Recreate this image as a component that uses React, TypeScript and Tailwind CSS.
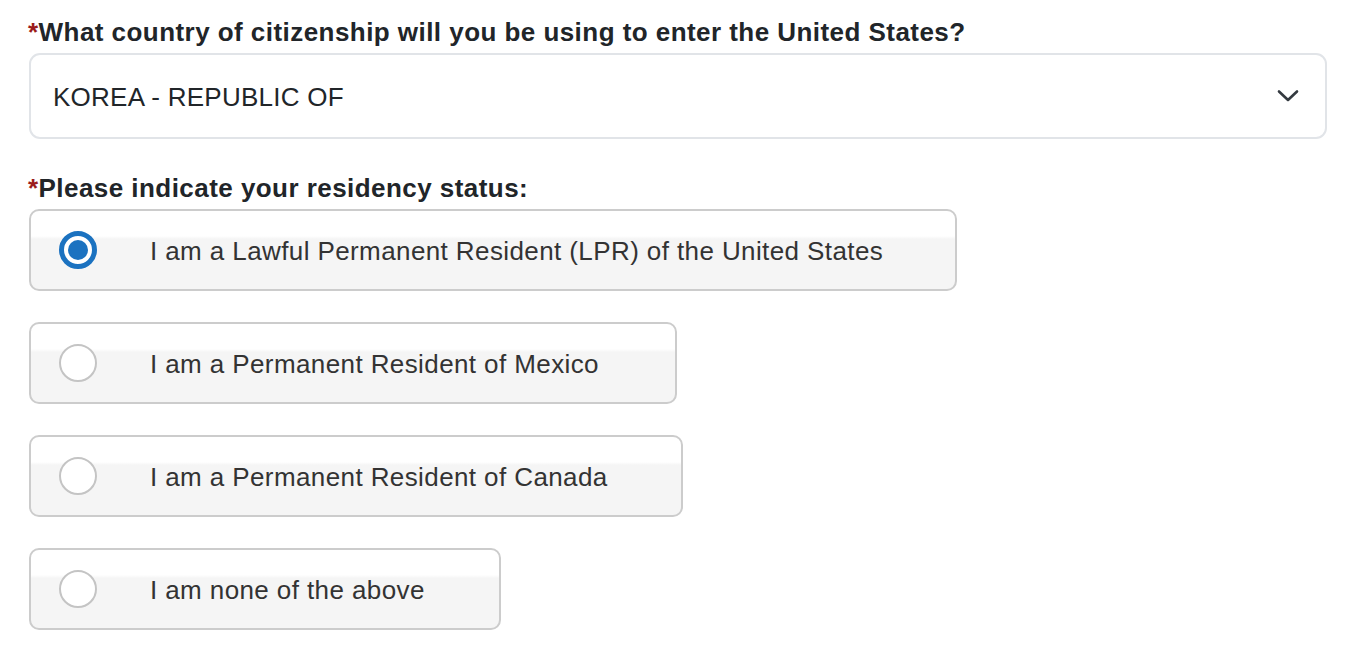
import React from "react";

const options = [
  { label: "I am a Lawful Permanent Resident (LPR) of the United States", checked: true, w: "w-[928px]" },
  { label: "I am a Permanent Resident of Mexico", checked: false, w: "w-[648px]" },
  { label: "I am a Permanent Resident of Canada", checked: false, w: "w-[654px]" },
  { label: "I am none of the above", checked: false, w: "w-[472px]" },
];

function Radio({ checked }: { checked: boolean }) {
  if (checked) {
    return (
      <div className="w-[38px] h-[38px] rounded-full border-[5px] border-[#1b72c0] bg-white flex items-center justify-center">
        <div className="w-[20px] h-[20px] rounded-full bg-[#1b72c0]" />
      </div>
    );
  }
  return <div className="w-[38px] h-[38px] rounded-full border-[2px] border-[#c4c4c4] bg-white" />;
}

export default function App() {
  return (
    <div className="w-[1362px] h-[665px] bg-white pl-[29px] pt-[17px] font-['Liberation_Sans',Arial,sans-serif]">
      <div className="text-[26px] tracking-[0.45px] font-bold text-[#212529] leading-[31px] -ml-[1px]">
        <span className="text-[#9b1c1c]">*</span>What country of citizenship will you be using to enter the United States?
      </div>
      <div className="mt-[5px] w-[1298px] h-[86px] border-2 border-[#e1e4e8] rounded-[11px] flex items-center justify-between pl-[22px] pr-[26px]">
        <span className="text-[26px] tracking-[0.25px] text-[#212529] pt-[2px]">KOREA - REPUBLIC OF</span>
        <svg width="22" height="14" viewBox="0 0 22 14" fill="none">
          <path d="M2 2.5 L11 11 L20 2.5" stroke="#343a40" strokeWidth="2.6" strokeLinecap="round" strokeLinejoin="round" />
        </svg>
      </div>
      <div className="mt-[34px] text-[26px] tracking-[0.45px] font-bold text-[#212529] leading-[31px] -ml-[1px]">
        <span className="text-[#9b1c1c]">*</span>Please indicate your residency status:
      </div>
      <div className="mt-[5px] flex flex-col gap-[31px]">
        {options.map((o) => (
          <div
            key={o.label}
            className={`${o.w} h-[82px] border-2 border-[#cccccc] rounded-[10px] bg-[linear-gradient(to_bottom,#ffffff_0%,#ffffff_32%,#f5f5f5_36%,#f5f5f5_100%)] flex items-center pl-[28px]`}
          >
            <Radio checked={o.checked} />
            <span className="ml-[53px] text-[26px] tracking-[0.4px] text-[#333333] pt-[2px]">{o.label}</span>
          </div>
        ))}
      </div>
    </div>
  );
}
